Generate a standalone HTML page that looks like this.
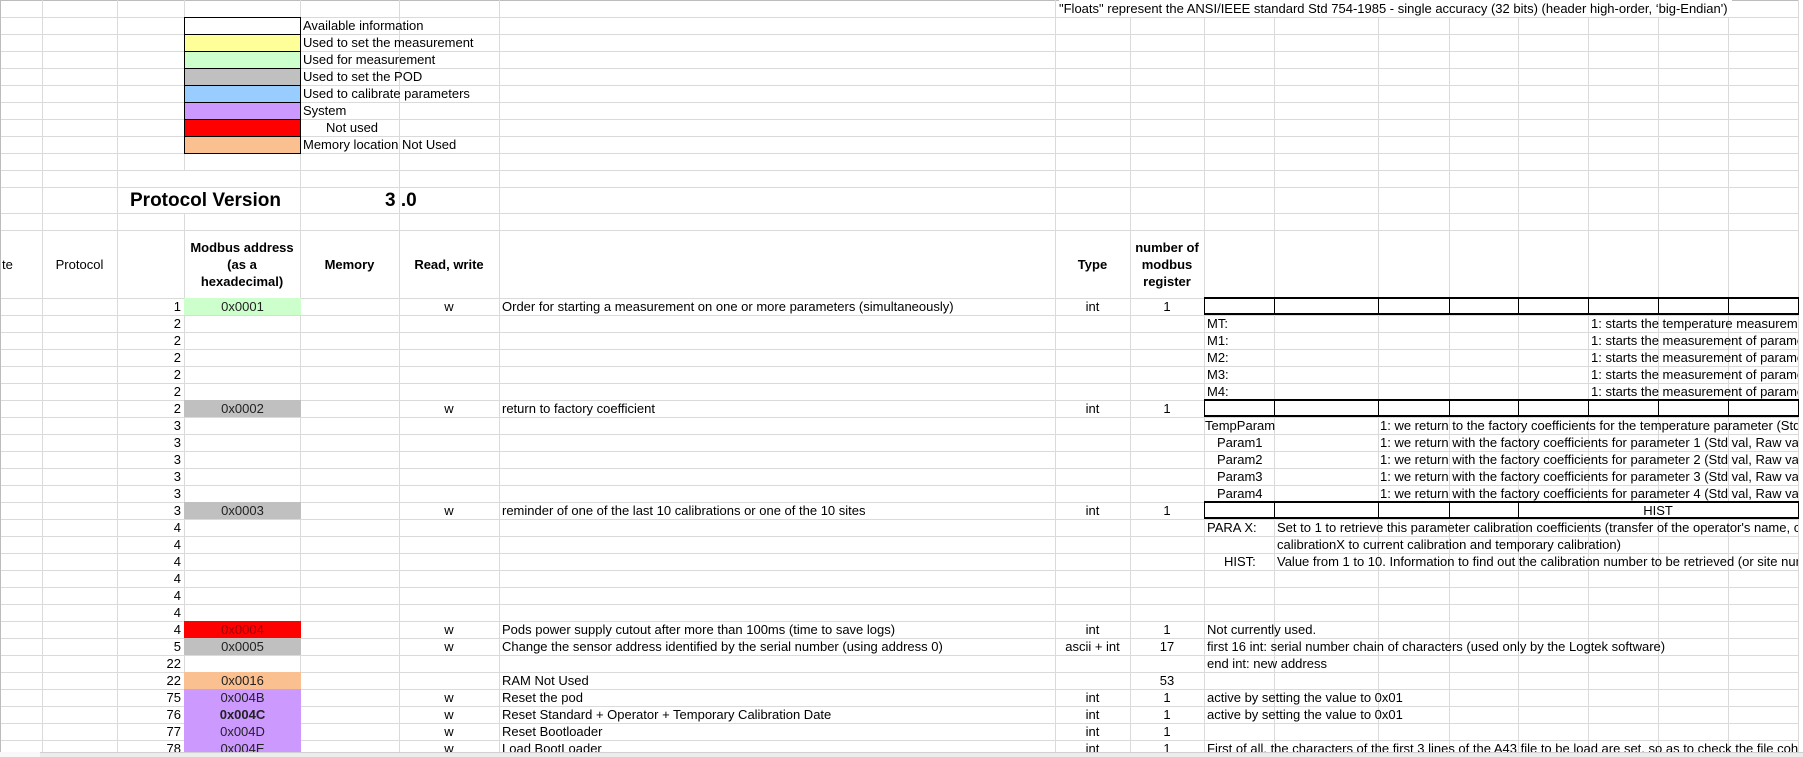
<!DOCTYPE html>
<html><head><meta charset="utf-8"><style>
*{margin:0;padding:0;box-sizing:border-box}
body{width:1803px;height:757px;overflow:hidden;background:#fff;position:relative;font-family:"Liberation Sans",Arial,sans-serif;font-size:13px;color:#000}
.h{position:absolute;left:0;width:1803px;height:1px;background:#dadada}
.v{position:absolute;width:1px;background:#dadada}
.t{position:absolute;height:17px;line-height:17px;white-space:nowrap}
.c{text-align:center}
.r{text-align:right}
.f{position:absolute;left:184px;width:117px;height:17px}
.sw{position:absolute;left:184px;width:117px;height:18px;border:1px solid #000}
.b{font-weight:bold}
.box{position:absolute;left:1204px;width:595px;height:18px;border-top:2px solid #000;border-bottom:2px solid #000;border-left:1px solid #000;border-right:1px solid #000}
.bv{position:absolute;width:1px;height:17px;background:#000}
.clip{position:absolute;left:1205px;top:0;width:593px;height:752px;overflow:hidden}
</style></head><body>
<!-- grid horizontal top -->
<div class="h" style="top:0;background:#bcbcbc"></div>
<div class="h" style="top:17px"></div><div class="h" style="top:34px"></div><div class="h" style="top:51px"></div><div class="h" style="top:68px"></div><div class="h" style="top:85px"></div><div class="h" style="top:102px"></div><div class="h" style="top:119px"></div><div class="h" style="top:136px"></div><div class="h" style="top:153px"></div><div class="h" style="top:170px"></div><div class="h" style="top:187px"></div><div class="h" style="top:213px"></div><div class="h" style="top:230px"></div>
<div style="position:absolute;left:0;top:298px;width:1803px;height:454px;background:repeating-linear-gradient(to bottom,#dadada 0 1px,transparent 1px 17px)"></div>
<!-- verticals -->
<div class="v" style="left:0;top:0;height:752px;background:#bcbcbc"></div>
<div class="v" style="left:42px;top:0;height:752px"></div>
<div class="v" style="left:117px;top:0;height:752px"></div>
<div class="v" style="left:184px;top:0;height:170px"></div>
<div class="v" style="left:184px;top:213px;height:539px"></div>
<div class="v" style="left:300px;top:0;height:752px"></div>
<div class="v" style="left:399px;top:0;height:752px"></div>
<div class="v" style="left:499px;top:0;height:752px"></div>
<div class="v" style="left:1055px;top:0;height:752px"></div>
<div class="v" style="left:1130px;top:0;height:752px"></div>
<div class="v" style="left:1204px;top:0;height:752px"></div>
<div class="v" style="left:1274px;top:0;height:752px"></div>
<div class="v" style="left:1378px;top:0;height:752px"></div>
<div class="v" style="left:1449px;top:0;height:752px"></div>
<div class="v" style="left:1518px;top:0;height:752px"></div>
<div class="v" style="left:1588px;top:0;height:752px"></div>
<div class="v" style="left:1658px;top:0;height:752px"></div>
<div class="v" style="left:1728px;top:0;height:752px"></div>
<div class="v" style="left:1798px;top:0;height:752px"></div>
<div style="position:absolute;left:1799px;top:0;width:4px;height:752px;background:#fff"></div>

<!-- Floats note -->
<div class="t" style="left:1059px;top:0;background:#fff;padding-right:4px">"Floats" represent the ANSI/IEEE standard Std 754-1985 - single accuracy (32 bits) (header high-order, ‘big-Endian')</div>

<!-- legend -->
<div class="sw" style="top:17px;background:#fff"></div>
<div class="sw" style="top:34px;background:#ffff99"></div>
<div class="sw" style="top:51px;background:#ccffcc"></div>
<div class="sw" style="top:68px;background:#c0c0c0"></div>
<div class="sw" style="top:85px;background:#99ccff"></div>
<div class="sw" style="top:102px;background:#cc99ff"></div>
<div class="sw" style="top:119px;background:#ff0000"></div>
<div class="sw" style="top:136px;background:#fac090"></div>
<div class="t" style="left:303px;top:17px">Available information</div>
<div class="t" style="left:303px;top:34px">Used to set the measurement</div>
<div class="t" style="left:303px;top:51px">Used for measurement</div>
<div class="t" style="left:303px;top:68px">Used to set the POD</div>
<div class="t" style="left:303px;top:85px">Used to calibrate parameters</div>
<div class="t" style="left:303px;top:102px">System</div>
<div class="t" style="left:326px;top:119px">Not used</div>
<div class="t" style="left:303px;top:136px">Memory location Not Used</div>

<!-- protocol version -->
<div class="t b" style="left:130px;top:188px;height:25px;line-height:25px;font-size:19px">Protocol Version</div>
<div class="t b" style="left:385px;top:188px;height:25px;line-height:25px;font-size:19px">3 .0</div>

<!-- header -->
<div class="t" style="left:2px;top:256px">te</div>
<div class="t c" style="left:42px;top:256px;width:75px">Protocol</div>
<div class="t c b" style="left:184px;top:239px;width:116px;height:51px;line-height:17px;white-space:normal">Modbus address<br>(as a<br>hexadecimal)</div>
<div class="t c b" style="left:300px;top:256px;width:99px">Memory</div>
<div class="t c b" style="left:399px;top:256px;width:100px">Read, write</div>
<div class="t c b" style="left:1055px;top:256px;width:75px">Type</div>
<div class="t c b" style="left:1130px;top:239px;width:74px;height:51px;line-height:17px;white-space:normal">number of<br>modbus<br>register</div>

<!-- fills -->
<div class="f" style="top:298px;background:#ccffcc"></div>
<div class="f" style="top:400px;background:#c0c0c0"></div>
<div class="f" style="top:502px;background:#c0c0c0"></div>
<div class="f" style="top:621px;background:#ff0000"></div>
<div class="f" style="top:638px;background:#c0c0c0"></div>
<div class="f" style="top:672px;background:#fac090"></div>
<div class="f" style="top:689px;height:63px;background:#cc99ff"></div>

<!-- numbers col -->
<div style="position:absolute;left:117px;top:298px;width:64px;text-align:right;line-height:17px">1<br>2<br>2<br>2<br>2<br>2<br>2<br>3<br>3<br>3<br>3<br>3<br>3<br>4<br>4<br>4<br>4<br>4<br>4<br>4<br>5<br>22<br>22<br>75<br>76<br>77<br>78</div>

<!-- hex -->
<div class="t c" style="left:184px;top:298px;width:117px;color:#222">0x0001</div>
<div class="t c" style="left:184px;top:400px;width:117px;color:#222">0x0002</div>
<div class="t c" style="left:184px;top:502px;width:117px;color:#222">0x0003</div>
<div class="t c" style="left:184px;top:621px;width:117px;color:#900">0x0004</div>
<div class="t c" style="left:184px;top:638px;width:117px;color:#222">0x0005</div>
<div class="t c" style="left:184px;top:672px;width:117px;color:#222">0x0016</div>
<div class="t c" style="left:184px;top:689px;width:117px;color:#222">0x004B</div>
<div class="t c b" style="left:184px;top:706px;width:117px;color:#222">0x004C</div>
<div class="t c" style="left:184px;top:723px;width:117px;color:#222">0x004D</div>
<div class="t c" style="left:184px;top:740px;width:117px;height:12px;overflow:hidden;color:#222">0x004E</div>

<!-- w col -->
<div class="t c" style="left:399px;top:298px;width:100px">w</div>
<div class="t c" style="left:399px;top:400px;width:100px">w</div>
<div class="t c" style="left:399px;top:502px;width:100px">w</div>
<div class="t c" style="left:399px;top:621px;width:100px">w</div>
<div class="t c" style="left:399px;top:638px;width:100px">w</div>
<div class="t c" style="left:399px;top:689px;width:100px">w</div>
<div class="t c" style="left:399px;top:706px;width:100px">w</div>
<div class="t c" style="left:399px;top:723px;width:100px">w</div>
<div class="t c" style="left:399px;top:740px;width:100px;height:12px;overflow:hidden">w</div>

<!-- descriptions -->
<div class="t" style="left:502px;top:298px">Order for starting a measurement on one or more parameters (simultaneously)</div>
<div class="t" style="left:502px;top:400px">return to factory coefficient</div>
<div class="t" style="left:502px;top:502px">reminder of one of the last 10 calibrations or one of the 10 sites</div>
<div class="t" style="left:502px;top:621px">Pods power supply cutout after more than 100ms (time to save logs)</div>
<div class="t" style="left:502px;top:638px">Change the sensor address identified by the serial number (using address 0)</div>
<div class="t" style="left:502px;top:672px">RAM Not Used</div>
<div class="t" style="left:502px;top:689px">Reset the pod</div>
<div class="t" style="left:502px;top:706px">Reset Standard + Operator + Temporary Calibration Date</div>
<div class="t" style="left:502px;top:723px">Reset Bootloader</div>
<div class="t" style="left:502px;top:740px;height:12px;overflow:hidden">Load BootLoader</div>

<!-- type / count -->
<div class="t c" style="left:1055px;top:298px;width:75px">int</div><div class="t c" style="left:1130px;top:298px;width:74px">1</div>
<div class="t c" style="left:1055px;top:400px;width:75px">int</div><div class="t c" style="left:1130px;top:400px;width:74px">1</div>
<div class="t c" style="left:1055px;top:502px;width:75px">int</div><div class="t c" style="left:1130px;top:502px;width:74px">1</div>
<div class="t c" style="left:1055px;top:621px;width:75px">int</div><div class="t c" style="left:1130px;top:621px;width:74px">1</div>
<div class="t c" style="left:1055px;top:638px;width:75px">ascii + int</div><div class="t c" style="left:1130px;top:638px;width:74px">17</div>
<div class="t c" style="left:1130px;top:672px;width:74px">53</div>
<div class="t c" style="left:1055px;top:689px;width:75px">int</div><div class="t c" style="left:1130px;top:689px;width:74px">1</div>
<div class="t c" style="left:1055px;top:706px;width:75px">int</div><div class="t c" style="left:1130px;top:706px;width:74px">1</div>
<div class="t c" style="left:1055px;top:723px;width:75px">int</div><div class="t c" style="left:1130px;top:723px;width:74px">1</div>
<div class="t c" style="left:1055px;top:740px;width:75px;height:12px;overflow:hidden">int</div><div class="t c" style="left:1130px;top:740px;width:74px;height:12px;overflow:hidden">1</div>

<!-- boxes -->
<div class="box" style="top:297px"></div>
<div class="box" style="top:399px"></div>
<div class="box" style="top:501px;background:#fff"></div>
<div class="bv" style="left:1274px;top:298px"></div><div class="bv" style="left:1378px;top:298px"></div><div class="bv" style="left:1449px;top:298px"></div><div class="bv" style="left:1518px;top:298px"></div><div class="bv" style="left:1588px;top:298px"></div><div class="bv" style="left:1658px;top:298px"></div><div class="bv" style="left:1728px;top:298px"></div>
<div class="bv" style="left:1274px;top:400px"></div><div class="bv" style="left:1378px;top:400px"></div><div class="bv" style="left:1449px;top:400px"></div><div class="bv" style="left:1518px;top:400px"></div><div class="bv" style="left:1588px;top:400px"></div><div class="bv" style="left:1658px;top:400px"></div><div class="bv" style="left:1728px;top:400px"></div>
<div class="bv" style="left:1274px;top:502px"></div><div class="bv" style="left:1378px;top:502px"></div><div class="bv" style="left:1449px;top:502px"></div><div class="bv" style="left:1518px;top:502px"></div>
<div class="t c" style="left:1518px;top:502px;width:280px">HIST</div>

<!-- right notes -->
<div class="clip">
<div class="t" style="left:2px;top:315px">MT:</div><div class="t" style="left:386px;top:315px">1: starts the temperature measurement</div>
<div class="t" style="left:2px;top:332px">M1:</div><div class="t" style="left:386px;top:332px">1: starts the measurement of parameter 1</div>
<div class="t" style="left:2px;top:349px">M2:</div><div class="t" style="left:386px;top:349px">1: starts the measurement of parameter 2</div>
<div class="t" style="left:2px;top:366px">M3:</div><div class="t" style="left:386px;top:366px">1: starts the measurement of parameter 3</div>
<div class="t" style="left:2px;top:383px">M4:</div><div class="t" style="left:386px;top:383px">1: starts the measurement of parameter 4</div>
<div class="t" style="left:0px;top:417px">TempParam</div><div class="t" style="left:175px;top:417px">1: we return to the factory coefficients for the temperature parameter (Std val, Raw val)</div>
<div class="t" style="left:12px;top:434px">Param1</div><div class="t" style="left:175px;top:434px">1: we return with the factory coefficients for parameter 1 (Std val, Raw val)</div>
<div class="t" style="left:12px;top:451px">Param2</div><div class="t" style="left:175px;top:451px">1: we return with the factory coefficients for parameter 2 (Std val, Raw val)</div>
<div class="t" style="left:12px;top:468px">Param3</div><div class="t" style="left:175px;top:468px">1: we return with the factory coefficients for parameter 3 (Std val, Raw val)</div>
<div class="t" style="left:12px;top:485px">Param4</div><div class="t" style="left:175px;top:485px">1: we return with the factory coefficients for parameter 4 (Std val, Raw val)</div>
<div class="t" style="left:2px;top:519px">PARA X:</div><div class="t" style="left:72px;top:519px">Set to 1 to retrieve this parameter calibration coefficients (transfer of the operator's name, calibration</div>
<div class="t" style="left:72px;top:536px">calibrationX to current calibration and temporary calibration)</div>
<div class="t" style="left:19px;top:553px">HIST:</div><div class="t" style="left:72px;top:553px">Value from 1 to 10. Information to find out the calibration number to be retrieved (or site number)</div>
<div class="t" style="left:2px;top:621px">Not currently used.</div>
<div class="t" style="left:2px;top:638px">first 16 int: serial number chain of characters (used only by the Logtek software)</div>
<div class="t" style="left:2px;top:655px">end int: new address</div>
<div class="t" style="left:2px;top:689px">active by setting the value to 0x01</div>
<div class="t" style="left:2px;top:706px">active by setting the value to 0x01</div>
<div class="t" style="left:2px;top:740px;height:12px;overflow:hidden">First of all, the characters of the first 3 lines of the A43 file to be load are set, so as to check the file coherence</div>
</div>

<!-- bottom bar -->
<div style="position:absolute;left:0;top:752px;width:1803px;height:5px;background:#ececec;border-top:1px solid #d0d0d0"></div>
<div style="position:absolute;left:0;top:752px;width:40px;height:5px;background:#f8f8f8"></div>
</body></html>
